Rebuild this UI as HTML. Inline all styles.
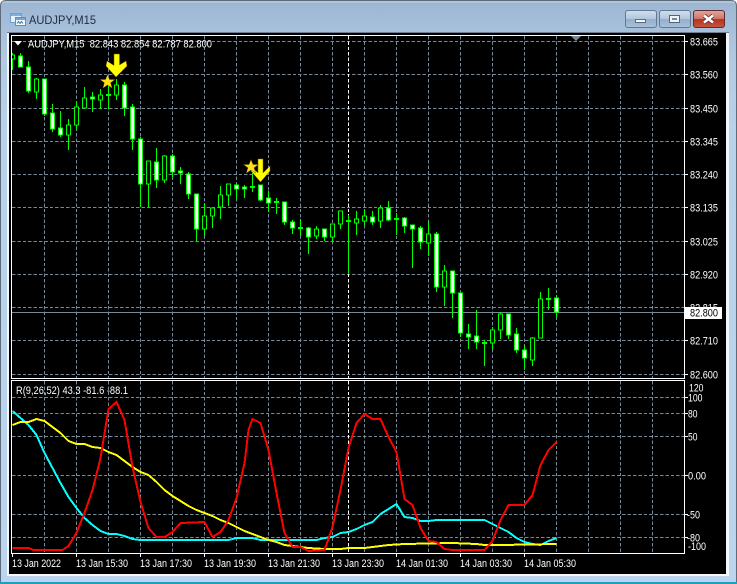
<!DOCTYPE html>
<html>
<head>
<meta charset="utf-8">
<style>
html,body{margin:0;padding:0;background:#fff}
#w{position:absolute;left:0;top:0;width:737px;height:584px;overflow:hidden;background:#fff}
svg{position:absolute;left:0;top:0;display:block}
text{font-family:"Liberation Sans",sans-serif;font-size:11px;fill:#fff}
.c{shape-rendering:crispEdges}
</style>
</head>
<body>
<div id="w">
<svg width="737" height="584" viewBox="0 0 737 584" xmlns="http://www.w3.org/2000/svg">
<defs>
<linearGradient id="fr" x1="0" y1="0" x2="0" y2="1"><stop offset="0" stop-color="#9cb6d2"/><stop offset=".1" stop-color="#b2c9e2"/><stop offset=".22" stop-color="#b9d2ec"/><stop offset="1" stop-color="#bbd5ee"/></linearGradient>
<linearGradient id="bt" x1="0" y1="0" x2="0" y2="1"><stop offset="0" stop-color="#cfdeed"/><stop offset=".48" stop-color="#b3c8de"/><stop offset=".52" stop-color="#94aecb"/><stop offset="1" stop-color="#a9c2dc"/></linearGradient>
<linearGradient id="cl" x1="0" y1="0" x2="0" y2="1"><stop offset="0" stop-color="#e0a79c"/><stop offset=".48" stop-color="#d0776a"/><stop offset=".52" stop-color="#b8321f"/><stop offset="1" stop-color="#c4543f"/></linearGradient>
<clipPath id="cp"><rect x="12" y="36" width="672" height="342"/></clipPath>
</defs>

<!-- window frame -->
<path d="M6 .5H731Q736.5 .5 736.5 6V584H.5V6Q.5 .5 6 .5Z" fill="url(#fr)" stroke="#5d6b7a"/>
<path d="M2 2H735" stroke="#d5e2ef" stroke-width="1" opacity=".7"/>
<rect x="0" y="582" width="737" height="2" fill="#1d9fc0"/>

<!-- title -->
<g class="c">
<rect x="10.5" y="13.5" width="11" height="9" fill="#e8f1fa" stroke="#6f9fd0"/>
<rect x="11" y="14" width="10" height="2" fill="#7fb0e0"/>
<rect x="15.5" y="17.5" width="10" height="8" fill="#f4f8fc" stroke="#5d8fc4"/>
<rect x="16" y="18" width="9" height="2" fill="#6fa5da"/>
</g>
<path d="M17 23.5l1.5-2 1.5 2 1.5-2 1.5 2" fill="none" stroke="#3b7f9e" stroke-width="1"/>
<text x="29" y="24" style="font-size:12px;fill:#1d2c40" textLength="67" lengthAdjust="spacingAndGlyphs">AUDJPY,M15</text>

<!-- buttons -->
<rect x="625.5" y="10.5" width="31" height="17" rx="2.5" fill="url(#bt)" stroke="#62788f"/>
<rect x="635.5" y="19.5" width="10" height="3" fill="#f3f6fa" stroke="#5b6b7d"/>
<rect x="659.5" y="10.5" width="31" height="17" rx="2.5" fill="url(#bt)" stroke="#62788f"/>
<rect class="c" x="669.5" y="15.5" width="10" height="7" fill="#eef3f8" stroke="#566678"/>
<rect class="c" x="672" y="18" width="5" height="2" fill="#7488a0"/>
<rect x="693.5" y="10.5" width="31" height="17" rx="2.5" fill="url(#cl)" stroke="#5c2b34"/>
<path d="M704 15.5l9 7M713 15.5l-9 7" stroke="#5a3038" stroke-width="4.2" fill="none"/>
<path d="M704 15.5l9 7M713 15.5l-9 7" stroke="#fff" stroke-width="2.6" fill="none"/>

<!-- client area -->
<rect x="7" y="32" width="722" height="544" fill="#f4f7fa" class="c"/>
<rect x="7" y="32" width="722" height="1" fill="#6f7f90" class="c"/>
<rect x="9" y="33" width="717" height="541" fill="#000" class="c"/>

<!-- grid main -->
<g class="c" fill="none" stroke="#778899" stroke-dasharray="3.4 2">
<path d="M12 41.5H684M12 74.5H684M12 108.5H684M12 141.5H684M12 174.5H684M12 207.5H684M12 241.5H684M12 274.5H684M12 307.5H684M12 340.5H684M12 374.5H684"/>
<path d="M44.5 36V378M76.5 36V378M108.5 36V378M140.5 36V378M172.5 36V378M204.5 36V378M236.5 36V378M268.5 36V378M300.5 36V378M332.5 36V378M364.5 36V378M396.5 36V378M428.5 36V378M460.5 36V378M492.5 36V378M524.5 36V378M556.5 36V378M588.5 36V378M620.5 36V378M652.5 36V378"/>
<!-- grid indicator -->
<path d="M12 397.5H684M12 413.5H684M12 436.5H684M12 475.5H684M12 514.5H684M12 537.5H684"/>
<path d="M44.5 381V553M76.5 381V553M108.5 381V553M140.5 381V553M172.5 381V553M204.5 381V553M236.5 381V553M268.5 381V553M300.5 381V553M332.5 381V553M364.5 381V553M396.5 381V553M428.5 381V553M460.5 381V553M492.5 381V553M524.5 381V553M556.5 381V553M588.5 381V553M620.5 381V553M652.5 381V553"/>
</g>
<path class="c" d="M348.5 36V378M348.5 381V553" stroke="#fff" stroke-dasharray="3.4 2" fill="none"/>
<path d="M571 36H581L576 41Z" fill="#778899"/>

<!-- price line -->
<path class="c" d="M12 312.5H684" stroke="#778899"/>

<!-- candles -->
<g class="c" clip-path="url(#cp)">
<path fill="none" stroke="#00ff00" d="M12.5 53V70M20.5 53V67M28.5 61V93M36.5 78V99M44.5 79V116M52.5 104V132M60.5 111V137M68.5 119V150M76.5 102V130M84.5 87V108M92.5 92V112M100.5 89V109M108.5 85V109M116.5 79V100M124.5 82V116M132.5 104V150M140.5 137V207M148.5 161V207M156.5 148V188M164.5 155V183M172.5 154V177M180.5 167V184M188.5 172V199M196.5 194V241M204.5 203V236M212.5 208V228M220.5 186V219M228.5 184V206M236.5 183V199M244.5 185V198M252.5 173V192M260.5 185V201M268.5 191V212M276.5 198V214M284.5 202V225M292.5 220V234M300.5 219V236M308.5 227V254M316.5 226V239M324.5 229V241M332.5 224V242M340.5 211V229M348.5 215V273M356.5 211V235M364.5 209V225M372.5 211V225M380.5 205V228M388.5 201V221M396.5 213V235M404.5 217V233M412.5 225V268M420.5 226V249M428.5 221V256M436.5 232V292M444.5 265V306M452.5 271V318M460.5 292V337M468.5 324V349M476.5 310V349M484.5 340V366M492.5 327V350M500.5 312V339M508.5 314V339M516.5 328V353M524.5 345V370M532.5 337V366M540.5 292V338M548.5 288V310M556.5 295V317"/>
<path fill="#00ff00" d="M106 94h5v2h-5zM250 186h5v2h-5zM274 201h5v2h-5zM298 227h5v2h-5zM346 220h5v2h-5zM394 218h5v2h-5zM482 342h5v2h-5zM546 298h5v2h-5z"/>
<path fill="#000" stroke="#00ff00" d="M10.5 55h4v4h-4zM34.5 79h4v13h-4zM66.5 125h4v10h-4zM74.5 107h4v18h-4zM82.5 98h4v10h-4zM98.5 95h4v5h-4zM114.5 85h4v10h-4zM146.5 161h4v23h-4zM162.5 156h4v24h-4zM202.5 216h4v13h-4zM210.5 208h4v8h-4zM218.5 195h4v12h-4zM226.5 184h4v11h-4zM314.5 229h4v7h-4zM330.5 224h4v13h-4zM338.5 211h4v13h-4zM354.5 219h4v4h-4zM362.5 216h4v5h-4zM378.5 208h4v13h-4zM426.5 234h4v9h-4zM442.5 271h4v16h-4zM490.5 330h4v13h-4zM498.5 314h4v16h-4zM530.5 338h4v22h-4zM538.5 299h4v39h-4z"/>
<path fill="#fff" stroke="#00ff00" d="M18.5 56h4v11h-4zM26.5 67h4v24h-4zM42.5 79h4v35h-4zM50.5 113h4v16h-4zM58.5 128h4v7h-4zM90.5 97h4v2h-4zM122.5 85h4v23h-4zM130.5 107h4v32h-4zM138.5 139h4v45h-4zM154.5 162h4v18h-4zM170.5 156h4v16h-4zM178.5 171h4v2h-4zM186.5 174h4v20h-4zM194.5 194h4v35h-4zM234.5 185h4v4h-4zM242.5 187h4v2h-4zM258.5 185h4v15h-4zM266.5 198h4v5h-4zM282.5 202h4v20h-4zM290.5 222h4v6h-4zM306.5 228h4v9h-4zM322.5 229h4v8h-4zM370.5 217h4v5h-4zM386.5 208h4v12h-4zM402.5 218h4v8h-4zM410.5 225h4v4h-4zM418.5 228h4v14h-4zM434.5 234h4v53h-4zM450.5 271h4v22h-4zM458.5 293h4v40h-4zM466.5 334h4v3h-4zM474.5 336h4v6h-4zM506.5 314h4v21h-4zM514.5 334h4v16h-4zM522.5 350h4v8h-4zM554.5 298h4v14h-4z"/>
</g>

<!-- markers -->
<path d="M107.5 74.5l2 5h5.5l-4.4 3.3 1.6 5.4-4.7-3.2-4.7 3.2 1.6-5.4-4.4-3.3h5.5z" fill="#ffe11a" stroke="#4a3a00" stroke-width=".4"/>
<path d="M114 54h5.5v11l6.5-4 1 5-11 11-10-11 1-5 7 4.5z" fill="#ffff00" stroke="#8a5a00" stroke-width=".5"/>
<path d="M258 159h5v14l7-7v5l-9.5 11-9.5-11v-5l7 7z" fill="#ffff00" stroke="#8a5a00" stroke-width=".5"/>
<path d="M251 159.5l2 5h5.5l-4.4 3.3 1.6 5.4-4.7-3.2-4.7 3.2 1.6-5.4-4.4-3.3h5.5z" fill="#ffe11a" stroke="#4a3a00" stroke-width=".4"/>

<!-- indicator lines -->
<g class="c" fill="none" stroke-width="2" transform="translate(.5 0)">
<polyline stroke="#00ffff" points="12,411 20,418 28,425 36,435 44,453 52,468 60,483 68,497 76,508 84,518 92,525 100,531 108,534 116,534 124,536 132,539 140,540 180,540 188,540 228,540 236,538 252,538 260,540 316,540 324,538 332,537 340,533 348,532 356,529 364,525 372,522 380,514 388,509 396,504 404,517 412,518 420,521 428,521 436,520 484,520 492,524 500,528 508,532 516,538 524,542 532,544 540,545 548,541 556,538"/>
<polyline stroke="#ffff00" points="12,425 20,422 28,422 36,419 44,421 52,427 60,433 68,441 76,444 84,444 92,447 100,448 108,452 116,455 124,461 132,467 140,472 148,475 156,482 164,490 172,496 180,501 188,506 196,510 204,513 212,516 220,520 228,523 236,527 244,531 252,534 260,537 268,540 276,542 284,545 292,546 308,548 324,549 340,549 348,548 364,548 380,546 388,545 404,544 452,543 476,544 484,545 500,545 556,544"/>
<polyline stroke="#ff0000" points="12,548 28,548 33,550 62,550 68,546 76,533 84,513 92,490 100,458 108,409 116,402 124,420 132,467 140,502 148,528 156,537 164,537 172,532 180,523 204,522 212,537 220,532 228,520 236,498 244,463 248,430 252,419 260,423 268,450 276,493 284,533 292,547 300,547 308,551 324,550 332,527 340,490 348,448 356,423 364,414 372,419 380,419 388,437 396,452 404,499 412,505 420,528 428,541 436,542 444,549 452,550 484,550 492,541 500,520 508,505 524,505 532,495 540,465 548,450 556,442"/>
</g>

<!-- pane frames -->
<g class="c" fill="none" stroke="#fff">
<rect x="11.5" y="35.5" width="673" height="343"/>
<rect x="11.5" y="380.5" width="673" height="173"/>
<path d="M685 41.5h3M685 74.5h3M685 108.5h3M685 141.5h3M685 174.5h3M685 207.5h3M685 241.5h3M685 274.5h3M685 307.5h3M685 340.5h3M685 374.5h3M685 397.5h3M685 413.5h3M685 436.5h3M685 475.5h3M685 514.5h3M685 537.5h3"/>
<path d="M12.5 553V557M76.5 553V557M140.5 553V557M204.5 553V557M268.5 553V557M332.5 553V557M396.5 553V557M460.5 553V557M524.5 553V557"/>
</g>

<!-- header -->
<path d="M14 41H22L18 45.5Z" fill="#fff"/>
<text x="28" y="47.5" xml:space="preserve" textLength="184" lengthAdjust="spacingAndGlyphs">AUDJPY,M15  82.843 82.854 82.787 82.800</text>
<text x="16" y="394" textLength="112" lengthAdjust="spacingAndGlyphs">R(9,26,52) 43.3 -81.6 -88.1</text>

<!-- price scale -->
<text x="690" y="45.5" textLength="28" lengthAdjust="spacingAndGlyphs">83.665</text>
<text x="690" y="78.5" textLength="28" lengthAdjust="spacingAndGlyphs">83.560</text>
<text x="690" y="112.5" textLength="28" lengthAdjust="spacingAndGlyphs">83.450</text>
<text x="690" y="145.5" textLength="28" lengthAdjust="spacingAndGlyphs">83.345</text>
<text x="690" y="178.5" textLength="28" lengthAdjust="spacingAndGlyphs">83.240</text>
<text x="690" y="211.5" textLength="28" lengthAdjust="spacingAndGlyphs">83.135</text>
<text x="690" y="245.5" textLength="28" lengthAdjust="spacingAndGlyphs">83.025</text>
<text x="690" y="278.5" textLength="28" lengthAdjust="spacingAndGlyphs">82.920</text>
<text x="690" y="311.5" textLength="28" lengthAdjust="spacingAndGlyphs">82.815</text>
<text x="690" y="344.5" textLength="28" lengthAdjust="spacingAndGlyphs">82.710</text>
<text x="690" y="378.5" textLength="28" lengthAdjust="spacingAndGlyphs">82.600</text>
<rect x="685" y="307" width="37" height="12" fill="#fff" class="c"/>
<text x="690" y="316.5" style="fill:#000" textLength="28" lengthAdjust="spacingAndGlyphs">82.800</text>

<!-- indicator scale -->
<text x="689" y="391.5" textLength="14.5" lengthAdjust="spacingAndGlyphs">120</text>
<text x="688" y="401.5" textLength="14.5" lengthAdjust="spacingAndGlyphs">100</text>
<text x="688" y="417.5" textLength="9.5" lengthAdjust="spacingAndGlyphs">80</text>
<text x="688" y="440.5" textLength="9.5" lengthAdjust="spacingAndGlyphs">50</text>
<text x="688" y="479.5" textLength="18" lengthAdjust="spacingAndGlyphs">0.00</text>
<text x="687" y="518.5" textLength="13" lengthAdjust="spacingAndGlyphs">-50</text>
<text x="687" y="541.5" textLength="13" lengthAdjust="spacingAndGlyphs">-80</text>
<text x="688" y="550" textLength="18" lengthAdjust="spacingAndGlyphs">-100</text>

<!-- time scale -->
<text x="12" y="567" textLength="49" lengthAdjust="spacingAndGlyphs">13 Jan 2022</text>
<text x="76" y="567" textLength="52" lengthAdjust="spacingAndGlyphs">13 Jan 15:30</text>
<text x="140" y="567" textLength="52" lengthAdjust="spacingAndGlyphs">13 Jan 17:30</text>
<text x="204" y="567" textLength="52" lengthAdjust="spacingAndGlyphs">13 Jan 19:30</text>
<text x="268" y="567" textLength="52" lengthAdjust="spacingAndGlyphs">13 Jan 21:30</text>
<text x="332" y="567" textLength="52" lengthAdjust="spacingAndGlyphs">13 Jan 23:30</text>
<text x="396" y="567" textLength="52" lengthAdjust="spacingAndGlyphs">14 Jan 01:30</text>
<text x="460" y="567" textLength="52" lengthAdjust="spacingAndGlyphs">14 Jan 03:30</text>
<text x="524" y="567" textLength="52" lengthAdjust="spacingAndGlyphs">14 Jan 05:30</text>
</svg>
</div>
</body>
</html>
